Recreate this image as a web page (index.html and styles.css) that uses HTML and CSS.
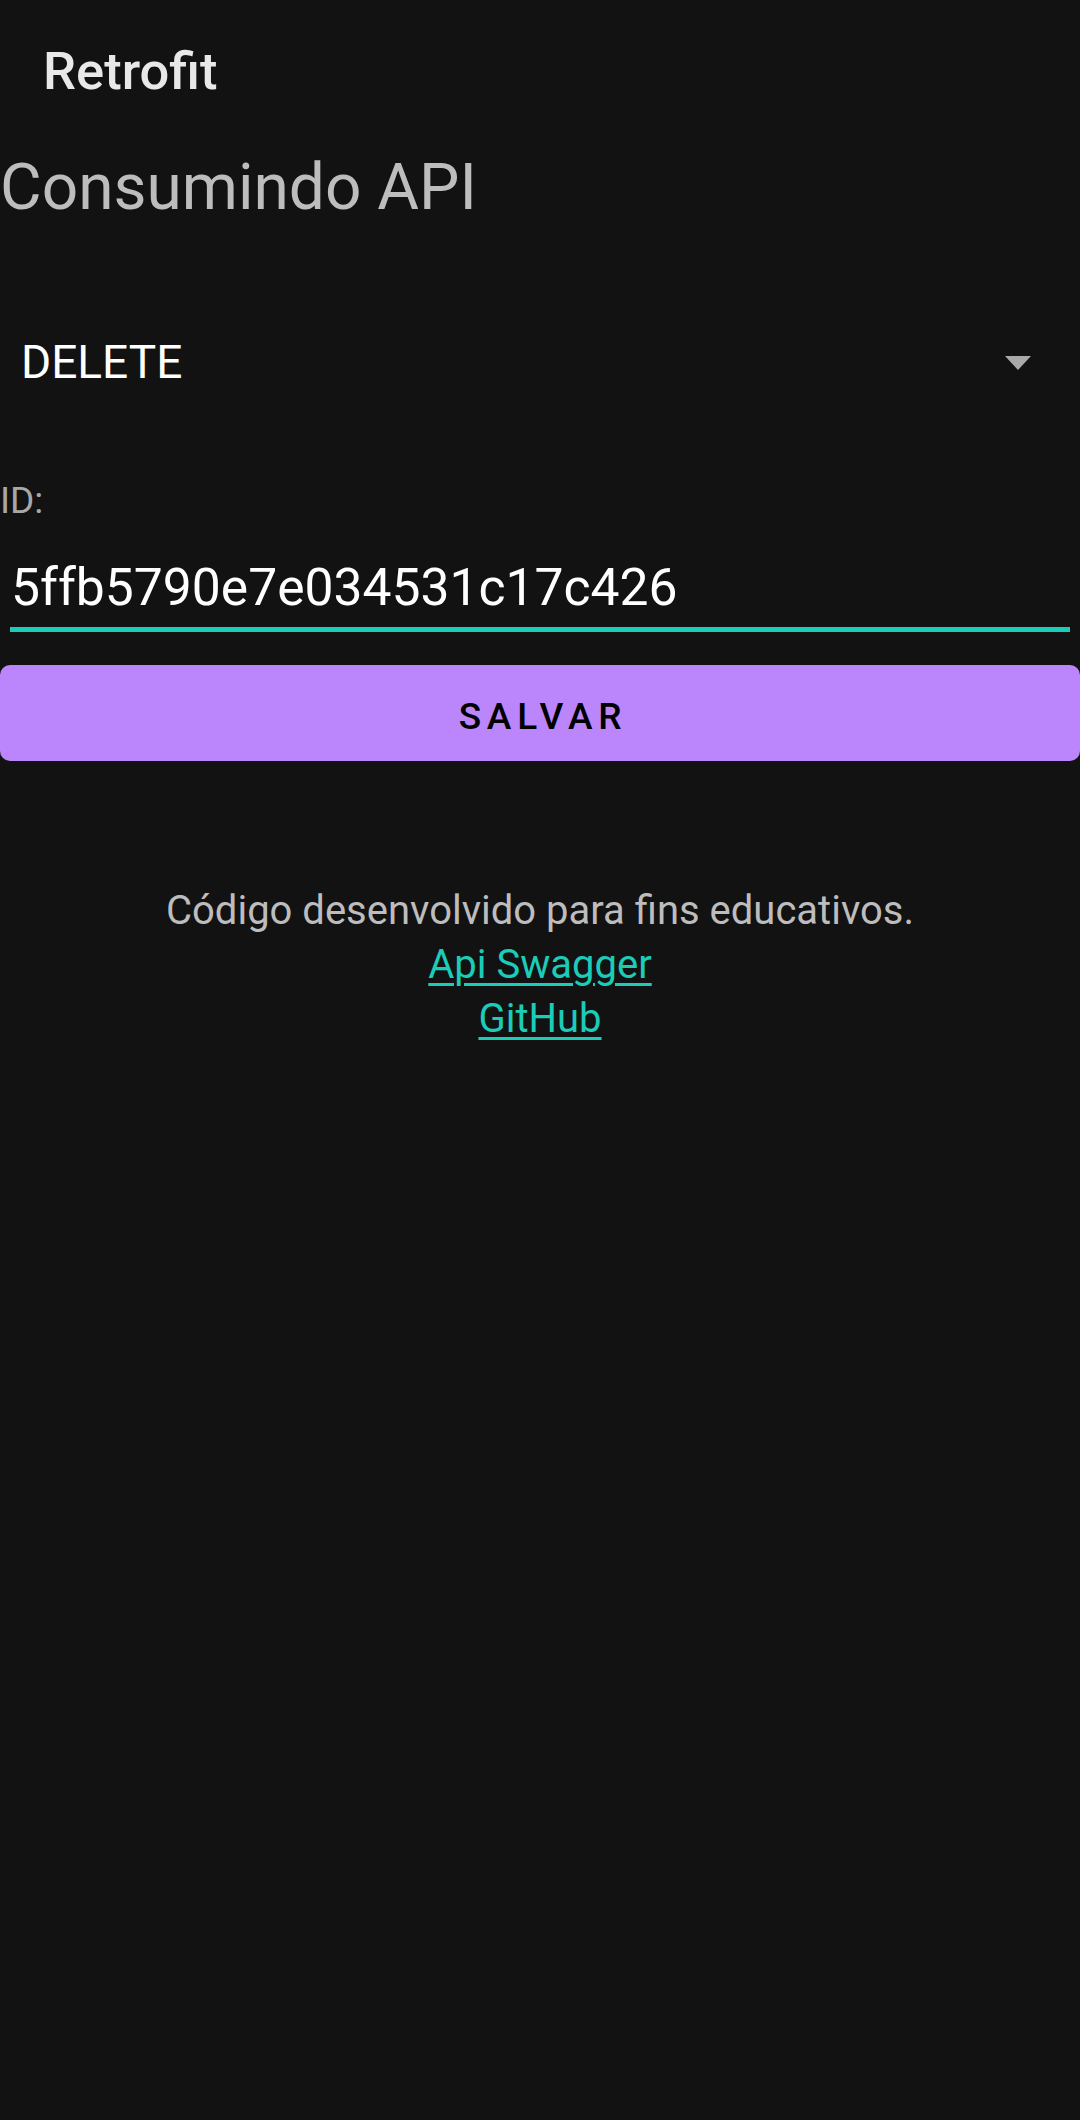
FILE: index.html
```html
<!DOCTYPE html>
<html lang="pt">
<head>
<meta charset="utf-8">
<title>Retrofit</title>
<link rel="stylesheet" href="styles.css">
</head>
<body>
<header class="toolbar">
  <h1 class="toolbar-title">Retrofit</h1>
</header>
<main class="content">
  <h2 class="heading">Consumindo API</h2>
  <div class="spinner">
    <span class="spinner-text">DELETE</span>
    <svg class="spinner-arrow" width="26" height="14" viewBox="0 0 26 14"><polygon points="0,0 26,0 13,14" fill="#a9a9a9"/></svg>
  </div>
  <label class="field-label" for="id">ID:</label>
  <div class="field">
    <span class="field-value" id="id">5ffb5790e7e034531c17c426</span>
  </div>
  <button class="btn">SALVAR</button>
  <footer class="info">
    <p class="info-text">Código desenvolvido para fins educativos.</p>
    <a class="info-link" href="#">Api Swagger</a>
    <a class="info-link" href="#">GitHub</a>
  </footer>
</main>
</body>
</html>
```
FILE: styles.css
```css
html, body {
  margin: 0;
  padding: 0;
  background: #121212;
}
body {
  font-family: Roboto, "Noto Sans", "Liberation Sans", sans-serif;
  width: 1080px;
  min-height: 2120px;
}
.toolbar {
  padding: 40px 0 0 43px;
}
.toolbar-title {
  margin: 0;
  font-size: 52.5px;
  line-height: 62px;
  font-weight: 500;
  color: #e8e8e8;
}
.content {
  display: flex;
  flex-direction: column;
}
.heading {
  margin: 48px 0 0 0;
  font-size: 64px;
  line-height: 76px;
  font-weight: 400;
  color: #bdbdbd;
}
.spinner {
  margin-top: 109px;
  display: flex;
  align-items: center;
  justify-content: space-between;
  padding: 0 49px 0 21px;
  height: 55px;
}
.spinner-text {
  font-size: 46px;
  line-height: 55px;
  color: #ffffff;
}
.spinner-arrow {
  display: block;
  margin-top: 1px;
}
.field-label {
  margin-top: 89px;
  font-size: 37px;
  line-height: 43px;
  color: #a8a8a8;
}
.field {
  margin: 36px 10px 0 10px;
  padding: 0 0 9px 1px;
  border-bottom: 5px solid #1bccb8;
}
.field-value {
  display: block;
  font-size: 51.6px;
  line-height: 60px;
  color: #ffffff;
}
.btn {
  margin-top: 33px;
  height: 96px;
  width: 1080px;
  border: none;
  border-radius: 10px;
  background: #bb86fc;
  color: #000000;
  font-family: inherit;
  font-size: 37px;
  font-weight: 500;
  letter-spacing: 5.8px;
  padding: 6px 0 0 6px;
  display: flex;
  align-items: center;
  justify-content: center;
}
.info {
  margin-top: 123px;
  display: flex;
  flex-direction: column;
  align-items: center;
}
.info-text {
  margin: 0;
  font-size: 40px;
  line-height: 54px;
  color: #bdbdbd;
}
.info-link {
  font-size: 40px;
  line-height: 54px;
  color: #1bccb8;
  text-decoration: underline;
  text-decoration-thickness: 3px;
  text-underline-offset: 5px;
}
```
